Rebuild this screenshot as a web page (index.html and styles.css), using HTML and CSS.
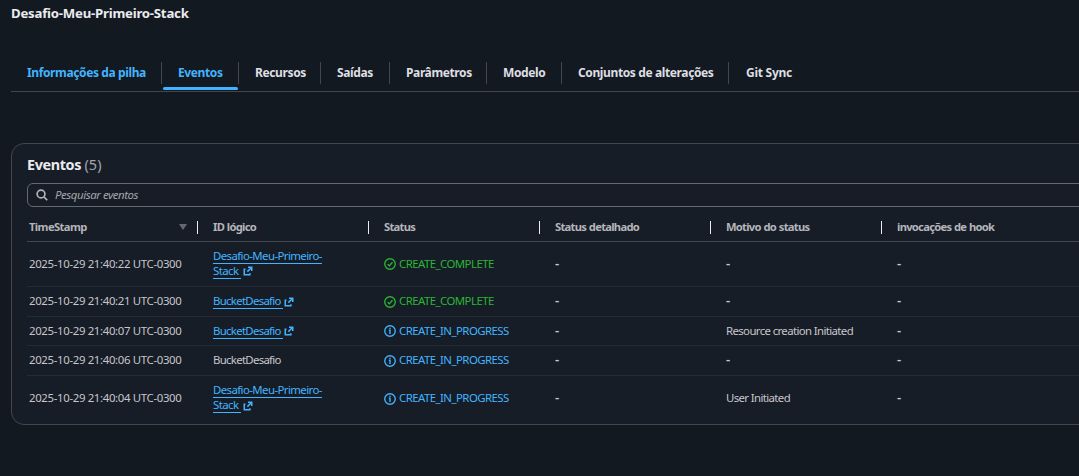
FILE: index.html
```html
<!DOCTYPE html>
<html lang="pt-BR">
<head>
<meta charset="utf-8">
<title>Desafio-Meu-Primeiro-Stack</title>
<link rel="stylesheet" href="styles.css">
</head>
<body>
<svg class="defs" width="0" height="0" aria-hidden="true">
  <symbol id="ok" viewBox="0 0 16 16"><circle cx="8" cy="8" r="7"/><path d="M4.800 8.200l2.300 2.300 4.200-4.800"/></symbol>
  <symbol id="info" viewBox="0 0 16 16"><circle cx="8" cy="8" r="7"/><path d="M8 12V7H6.500M8 5.400V3.600"/></symbol>
  <symbol id="ext" viewBox="0 0 16 16"><path d="M8 2H14v6M14 2L7 9M4 5H2v9h9v-2.500"/></symbol>
</svg>
<h1 class="stack-name">Desafio-Meu-Primeiro-Stack</h1>
<nav class="tabs">
  <a class="tab tab-info">Informações da pilha</a>
  <a class="tab tab-events">Eventos</a>
  <a class="tab tab-resources">Recursos</a>
  <a class="tab tab-outputs">Saídas</a>
  <a class="tab tab-params">Parâmetros</a>
  <a class="tab tab-template">Modelo</a>
  <a class="tab tab-changes">Conjuntos de alterações</a>
  <a class="tab tab-git">Git Sync</a>
</nav>
<main class="panel">
  <h2 class="panel-title">Eventos <span class="count">(5)</span></h2>
  <div class="search">
    <svg class="search-icon" viewBox="0 0 16 16"><circle cx="6.700" cy="6.700" r="5.200"/><path d="M10.500 10.500L15 15"/></svg>
    <span>Pesquisar eventos</span>
  </div>
  <div class="row head">
    <div class="cell sorted"><span>TimeStamp</span><i class="sort"></i></div>
    <div class="cell"><span>ID lógico</span></div>
    <div class="cell"><span>Status</span></div>
    <div class="cell"><span>Status detalhado</span></div>
    <div class="cell"><span>Motivo do status</span></div>
    <div class="cell"><span>invocações de hook</span></div>
  </div>
  <div class="row tall">
    <div class="cell time"><span>2025-10-29 21:40:22 UTC-0300</span></div>
    <div class="cell"><div class="stacked"><a class="link">Desafio-Meu-Primeiro-</a><div class="line"><a class="link tail">Stack</a><svg class="ext"><use href="#ext"/></svg></div></div></div>
    <div class="cell status done"><svg><use href="#ok"/></svg><span>CREATE_COMPLETE</span></div>
    <div class="cell empty">-</div><div class="cell empty">-</div><div class="cell empty">-</div>
  </div>
  <div class="row">
    <div class="cell time"><span>2025-10-29 21:40:21 UTC-0300</span></div>
    <div class="cell"><div class="line"><a class="link tail bucket">BucketDesafio</a><svg class="ext"><use href="#ext"/></svg></div></div>
    <div class="cell status done"><svg><use href="#ok"/></svg><span>CREATE_COMPLETE</span></div>
    <div class="cell empty">-</div><div class="cell empty">-</div><div class="cell empty">-</div>
  </div>
  <div class="row short">
    <div class="cell time"><span>2025-10-29 21:40:07 UTC-0300</span></div>
    <div class="cell"><div class="line"><a class="link tail bucket">BucketDesafio</a><svg class="ext"><use href="#ext"/></svg></div></div>
    <div class="cell status"><svg><use href="#info"/></svg><span>CREATE_IN_PROGRESS</span></div>
    <div class="cell empty">-</div><div class="cell reason"><span>Resource creation Initiated</span></div><div class="cell empty">-</div>
  </div>
  <div class="row">
    <div class="cell time"><span>2025-10-29 21:40:06 UTC-0300</span></div>
    <div class="cell"><span class="bucket">BucketDesafio</span></div>
    <div class="cell status"><svg><use href="#info"/></svg><span>CREATE_IN_PROGRESS</span></div>
    <div class="cell empty">-</div><div class="cell empty">-</div><div class="cell empty">-</div>
  </div>
  <div class="row tall last">
    <div class="cell time"><span>2025-10-29 21:40:04 UTC-0300</span></div>
    <div class="cell"><div class="stacked"><a class="link">Desafio-Meu-Primeiro-</a><div class="line"><a class="link tail">Stack</a><svg class="ext"><use href="#ext"/></svg></div></div></div>
    <div class="cell status"><svg><use href="#info"/></svg><span>CREATE_IN_PROGRESS</span></div>
    <div class="cell empty">-</div><div class="cell reason"><span>User Initiated</span></div><div class="cell empty">-</div>
  </div>
</main>
</body>
</html>
```
FILE: styles.css
```css
* { box-sizing: border-box; }
html { overflow: hidden; }
body {
  margin: 0;
  padding-left: 11px;
  height: 476px;
  overflow: hidden;
  background: #131920;
  color: #c6c6cd;
  font: 11.4px/15px "Noto Sans", "Open Sans", sans-serif;
  letter-spacing: -0.3px;
}
.defs { position: absolute; }
svg { fill: none; stroke: currentColor; stroke-width: 1.8; flex: none; }
h1, h2 { margin: 0; }
.stack-name {
  height: 54px;
  padding-top: 4px;
  color: #ebebf0;
  font-size: 13.2px;
  line-height: 18px;
  letter-spacing: -0.22px;
}
.tabs {
  display: flex;
  height: 38px;
  border-bottom: 1px solid #424650;
  color: #dedee3;
  font-size: 12px;
  font-weight: 700;
  letter-spacing: -0.38px;
  white-space: nowrap;
}
.tab {
  position: relative;
  height: 22px;
  margin-top: 8px;
  padding-left: 16px;
  border-right: 1px solid #424650;
  line-height: 22px;
}
.tab-info { width: 151px; color: #42b4ff; }
.tab-events { width: 77px; color: #42b4ff; }
.tab-events::after {
  content: "";
  position: absolute;
  left: 1px;
  bottom: -6px;
  width: 75px;
  height: 3px;
  border-radius: 2px;
  background: #42b4ff;
}
.tab-resources { width: 82px; }
.tab-outputs { width: 69px; }
.tab-params { width: 97px; }
.tab-template { width: 75px; }
.tab-changes { width: 167px; }
.tab-git { padding-left: 17px; border: 0; letter-spacing: -0.25px; }
.panel {
  width: 1100px;
  height: 282px;
  margin-top: 51px;
  padding: 0 15px;
  border: 1px solid #424650;
  border-radius: 13px;
  background: #161d26;
}
.panel-title {
  height: 39px;
  padding-top: 11px;
  color: #ebebf0;
  font-size: 14.4px;
  line-height: 20px;
  letter-spacing: -0.38px;
}
.count { color: #a4a4ad; font-weight: 400; letter-spacing: 0.1px; }
.search {
  display: flex;
  align-items: center;
  gap: 7px;
  height: 24px;
  padding-left: 8px;
  border: 1px solid #656871;
  border-radius: 6px;
  color: #a4a4ad;
  font-style: italic;
  letter-spacing: -0.42px;
}
.search span { padding-bottom: 1px; }
.search-icon { width: 12px; height: 12px; color: #b4b4bb; stroke-width: 2.2; }
.row {
  display: grid;
  grid-template-columns: 171px 171px 171px 171px 171px 1fr;
  height: 30px;
  border-bottom: 1px solid #232b37;
  white-space: nowrap;
}
.head {
  height: 35px;
  padding-top: 6px;
  border-color: #424650;
  color: #b4b4bb;
  font-size: 11.2px;
  font-weight: 700;
  letter-spacing: -0.72px;
  word-spacing: 0.5px;
}
.head .cell:not(:last-child) {
  background: linear-gradient(#ebebf0, #ebebf0) right 8px / 1px 13px no-repeat;
}
.cell { display: flex; align-items: center; padding-left: 15px; }
.cell > span { padding-bottom: 2px; }
.cell:first-child { padding-left: 2px; }
.time { letter-spacing: -0.34px; }
.sorted { justify-content: space-between; padding-right: 11px; letter-spacing: -0.6px; }
.sort {
  border: 4px solid transparent;
  border-top: 6px solid #656871;
  border-bottom: 0;
}
.tall { height: 45px; }
.short { height: 29px; }
.last { height: 45px; border: 0; }
.stacked { display: flex; flex-direction: column; align-items: flex-start; padding-bottom: 1px; }
.line { display: flex; align-items: center; gap: 2px; }
.link {
  height: 15px;
  border-bottom: 1px solid #42b4ff;
  color: #42b4ff;
  line-height: 13px;
  letter-spacing: -0.58px;
}
.bucket { letter-spacing: -0.7px; }
.tail { padding-right: 3px; }
.bucket.tail { padding-right: 2px; }
.bucket + .ext { margin-left: -1px; }
.ext { width: 10px; height: 10px; color: #42b4ff; stroke-width: 2.4; }
.status { gap: 3px; color: #42b4ff; letter-spacing: -0.54px; }
.status svg { width: 12px; height: 12px; }
.done { color: #2bb534; }
.reason { letter-spacing: -0.62px; }
.empty { padding-bottom: 2px; font-size: 13px; font-weight: 600; }
```
